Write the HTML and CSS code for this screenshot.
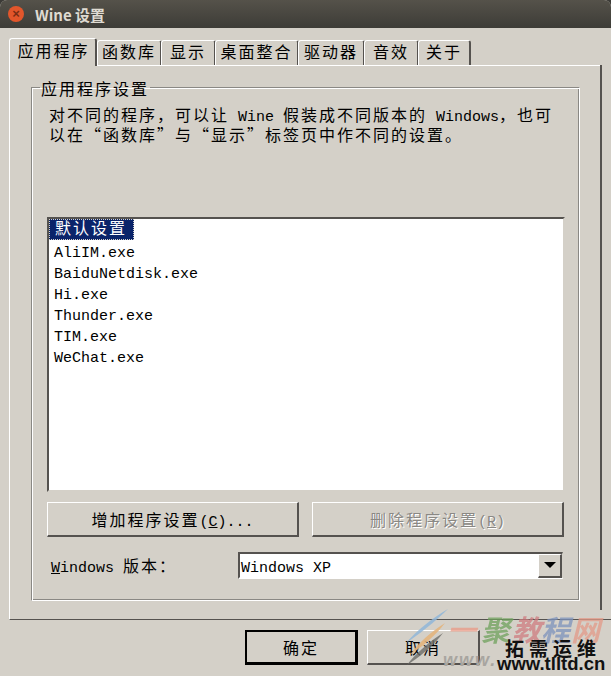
FILE: index.html
```html
<!DOCTYPE html>
<html lang="zh">
<head>
<meta charset="utf-8">
<title>Wine 设置</title>
<link rel="stylesheet" href="styles.css">
</head>
<body>
<div class="window">
  <header class="titlebar">
    <span class="close">×</span>
    <span class="title">Wine 设置</span>
  </header>
  <main class="content">
    <nav class="tabs">
      <span class="tab active"><span class="zh">应用程序</span></span>
      <span class="tab t-lib"><span class="zh">函数库</span></span>
      <span class="tab t-show"><span class="zh">显示</span></span>
      <span class="tab t-desk"><span class="zh">桌面整合</span></span>
      <span class="tab t-drive"><span class="zh">驱动器</span></span>
      <span class="tab t-audio"><span class="zh">音效</span></span>
      <span class="tab t-about"><span class="zh">关于</span></span>
    </nav>
    <section class="pane">
      <fieldset class="group">
        <legend class="legend"><span class="zh">应用程序设置</span></legend>
        <p class="desc"><span class="zh">对不同的程序，可以让</span> Wine <span class="zh">假装成不同版本的</span> Windows<span class="zh">，也可</span><br><span class="zh">以在“函数库”与“显示”标签页中作不同的设置。</span></p>
        <ul class="list">
          <li class="item selected"><span class="zh">默认设置</span></li>
          <li class="item">AliIM.exe</li>
          <li class="item">BaiduNetdisk.exe</li>
          <li class="item">Hi.exe</li>
          <li class="item">Thunder.exe</li>
          <li class="item">TIM.exe</li>
          <li class="item">WeChat.exe</li>
        </ul>
        <div class="actions">
          <button class="btn"><span class="zh">增加程序设置</span>(<u>C</u>)...</button>
          <button class="btn disabled" disabled><span class="zh">删除程序设置</span>(<u>R</u>)</button>
        </div>
        <div class="version">
          <label class="version-label"><u>W</u>indows <span class="zh">版本：</span></label>
          <div class="combo">
            <span class="combo-value">Windows XP</span>
            <span class="combo-arrow"><svg width="12" height="6" viewBox="0 0 12 6"><path d="M0 0h12L6 6z" fill="#000"/></svg></span>
          </div>
        </div>
      </fieldset>
    </section>
    <footer class="footer">
      <button class="dlg default"><span class="zh">确定</span></button>
      <button class="dlg"><span class="zh">取消</span></button>
    </footer>
  </main>
  <aside class="mark">
    <svg class="mark-logo" width="60" height="72" viewBox="0 0 60 72">
      <path d="M48 5C34 13 16 27 6 39 18 31 36 17 48 5z" fill="#8fb6d8" opacity=".85"/>
      <path d="M45 19C32 27 18 39 10 51 22 43 36 31 45 19z" fill="#e3b47c" opacity=".9"/>
      <path d="M43 29C30 37 15 50 7 61 20 53 34 41 43 29z" fill="#6b6b68" opacity=".8"/>
    </svg>
    <span class="mark-a">一</span><span class="mark-b">聚</span><span class="mark-c">教</span><span class="mark-d">程</span><span class="mark-e">网</span>
    <span class="mark-www">www.</span>
    <span class="mark-name">拓需运维</span>
    <span class="mark-url">www.tlltd.cn</span>
  </aside>
</div>
</body>
</html>
```

FILE: styles.css
```css
* { box-sizing: border-box; }
html, body { margin: 0; padding: 0; background: #3c3b37; }
.window {
  position: relative;
  width: 611px;
  height: 676px;
  overflow: hidden;
  background: #d4d0c8;
  border-radius: 7px 7px 0 0;
  font: 15px/20px "Liberation Mono", monospace;
  color: #000;
}
.zh {
  font-family: "Noto Sans CJK SC", sans-serif;
  font-size: 16px;
  line-height: 16px;
  font-weight: 400;
  letter-spacing: 2px;
}
.titlebar {
  height: 28px;
  display: flex;
  align-items: center;
  padding-left: 8px;
  background: linear-gradient(#55524a, #3d3c37);
  color: #dfdbd2;
  font: 700 15px "Noto Sans CJK SC", "Noto Sans", sans-serif;
}
.close {
  width: 16px;
  height: 16px;
  margin-right: 11px;
  border-radius: 50%;
  background: #e2562b;
  color: #7a2d14;
  font: 700 13px/15px "Liberation Sans", sans-serif;
  text-align: center;
}
.content { padding: 10px 0 0 9px; }
.tabs { display: flex; height: 27px; align-items: flex-end; position: relative; z-index: 1; }
.tab {
  height: 25px;
  text-align: center;
  background: #d4d0c8;
  border: 1px solid #fff;
  border-bottom: 0;
  border-right: 2px solid #55524f;
  border-radius: 3px 3px 0 0;
  line-height: 27px;
  margin-right: -1px;
  white-space: nowrap;
}
.tab.active { width: 88px; height: 28px; margin-right: 0; margin-bottom: -1px; padding-left: 2px; line-height: 29px; }
.t-lib { width: 65px; }
.t-show { width: 55px; }
.t-desk { width: 84px; }
.t-drive { width: 67px; }
.t-audio { width: 55px; }
.t-about { width: 53px; }
.pane {
  position: relative;
  width: 593px;
  height: 555px;
  padding: 14px 0 0 21px;
  border: 1px solid #fff;
  border-bottom-color: #55524f;
  border-right: 0;
}
.pane::before {
  content: "";
  position: absolute;
  right: 0;
  top: -1px;
  bottom: 9px;
  width: 2px;
  background: #55524f;
}
.pane::after {
  content: "";
  position: absolute;
  left: 590px;
  bottom: -1px;
  width: 20px;
  height: 1px;
  background: #55524f;
}
.group {
  position: relative;
  margin: 0;
  width: 549px;
  height: 521px;
  padding: 0;
  border: 1px solid #fff;
  border-top-color: #8a8884;
  border-left-color: #8a8884;
  box-shadow: inset 1px 1px 0 #fff, inset -1px -1px 0 #8a8884;
}
.legend {
  margin: 0 0 0 8px;
  padding: 0 1px;
  height: 14px;
  line-height: 16px;
  white-space: nowrap;
}
.desc {
  margin: 12px 0 0 17px;
  height: 111px;
  line-height: 17px;
  white-space: nowrap;
}
.list {
  list-style: none;
  margin: 0 0 0 15px;
  padding: 0;
  width: 518px;
  height: 275px;
  background: #fff;
  border: 2px solid #55524f;
  border-right-color: #d4d0c8;
  border-bottom-color: #d4d0c8;
}
.item { height: 21px; line-height: 27px; padding-left: 5px; white-space: nowrap; }
.item.selected {
  width: 85px;
  line-height: 22px;
  padding-left: 6px;
  background: #0a246a;
  color: #fff;
  outline: 1px dotted #d4d0c8;
  outline-offset: -1px;
}
.actions { display: flex; gap: 13px; margin: 10px 0 0 15px; }
.btn, .dlg {
  font: inherit;
  color: #000;
  background: #d4d0c8;
  border: 1px solid #fff;
  border-right: 2px solid #55524f;
  border-bottom: 2px solid #55524f;
  padding: 6px 0 0;
}
.btn { width: 252px; height: 35px; }
.btn.disabled { color: #8a8884; text-shadow: 1px 1px 0 #fff; }
.version { display: flex; align-items: center; margin: 15px 0 0 19px; }
.version-label { width: 187px; padding-top: 5px; white-space: nowrap; }
.combo {
  display: flex;
  align-items: center;
  justify-content: space-between;
  width: 325px;
  height: 27px;
  background: #fff;
  border: 2px solid #55524f;
  border-right: 1px solid #d4d0c8;
  border-bottom-color: #fff;
}
.combo-value { padding: 7px 0 0 1px; }
.combo-arrow {
  display: flex;
  align-items: center;
  justify-content: center;
  width: 24px;
  height: 24px;
  background: #d4d0c8;
  border: 1px solid #fff;
  border-right: 2px solid #55524f;
  border-bottom: 2px solid #55524f;
}
.footer { display: flex; gap: 9px; margin: 10px 0 0 236px; }
.dlg { width: 113px; height: 35px; }
.dlg.default { border: 2px solid #000; border-right-width: 3px; border-bottom-width: 3px; }
.mark { position: absolute; left: 400px; top: 600px; width: 211px; height: 76px; pointer-events: none; }
.mark-logo { position: absolute; left: 0; top: 4px; }
.mark span { position: absolute; font-family: "Noto Sans CJK SC", sans-serif; font-weight: 700; white-space: nowrap; }
.mark-a, .mark-b, .mark-c, .mark-d, .mark-e { top: 15px; font-size: 29px; line-height: 26px; font-style: italic; opacity: .75; }
.mark-a { left: 47px; color: #ea9a86; }
.mark-b { left: 81px; color: #6fa25d; }
.mark-c { left: 112px; color: #cf7d80; }
.mark-d { left: 141px; color: #7d93bd; }
.mark-e { left: 171px; color: #e39a88; }
.mark .mark-www { left: 43px; top: 50px; font: italic 700 18px/20px "Liberation Sans", sans-serif; color: #a8a5a0; letter-spacing: 2px; }
.mark .mark-name { left: 105px; top: 40px; font-size: 19px; line-height: 15px; color: #111; letter-spacing: 5px; }
.mark .mark-url { left: 97px; top: 56px; font: 700 18.5px/16px "Liberation Sans", sans-serif; color: #111; }
```
